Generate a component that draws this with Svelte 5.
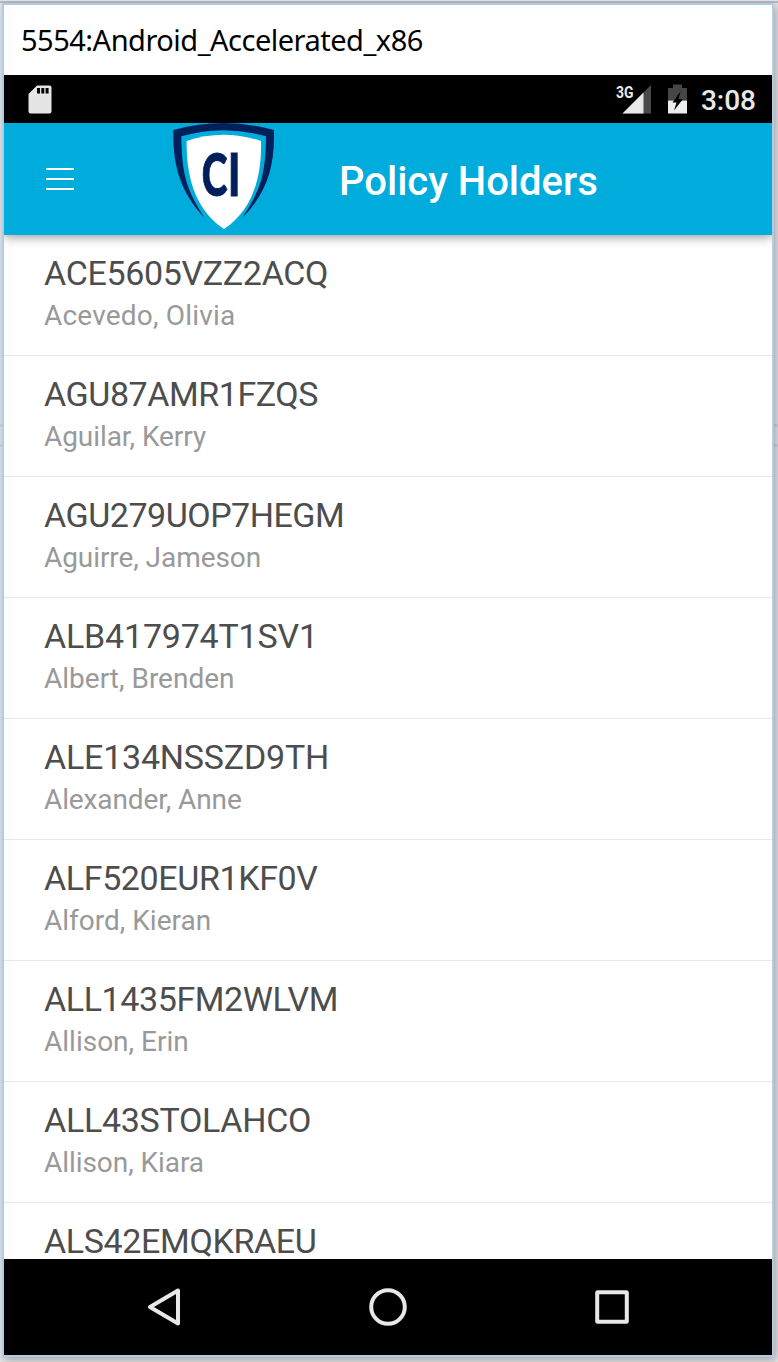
<script>
  // policy number, holder name, tracking of each line in px
  const holders = [
    ['ACE5605VZZ2ACQ', 'Acevedo, Olivia', -0.34, 0.2],
    ['AGU87AMR1FZQS', 'Aguilar, Kerry', -0.44, -0.07],
    ['AGU279UOP7HEGM', 'Aguirre, Jameson', -0.48, -0.07],
    ['ALB417974T1SV1', 'Albert, Brenden', -0.2, 0],
    ['ALE134NSSZD9TH', 'Alexander, Anne', -0.22, -0.12],
    ['ALF520EUR1KF0V', 'Alford, Kieran', -0.38, 0],
    ['ALL1435FM2WLVM', 'Allison, Erin', -0.4, 0],
    ['ALL43STOLAHCO', 'Allison, Kiara', -0.3, -0.06],
    ['ALS42EMQKRAEU', '', -0.36, 0]
  ];
</script>

<div class="desktop">
  <div class="window">
    <div class="titlebar"><span>5554:Android_Accelerated_x86</span></div>

    <div class="status">
      <svg class="sd" width="24" height="29" viewBox="0 0 24 29">
        <path d="M9 .5H21.5Q23.500 .5 23.500 2.500V26.500Q23.500 28.500 21.500 28.500H2.500Q.5 28.500 .5 26.500V9Z" fill="#e5e5e5" />
        <path d="M9 3h3v5.500h-3zM13.300 3h3v5.500h-3zM17.600 3h3v5.500h-3z" fill="#000" />
      </svg>
      <div class="indicators">
        <svg width="36" height="30" viewBox="0 0 36 30">
          <path d="M35 0V28.500H6.500Z" fill="#4a4a4a" />
          <path d="M27.500 7.500V28.500H6.500Z" fill="#e8e8e8" />
          <text x="0" y="12.500" textLength="17.500" lengthAdjust="spacingAndGlyphs">3G</text>
        </svg>
        <svg class="battery" width="20" height="30" viewBox="0 0 20 30">
          <path d="M0 3H5V-.5H14V3H19V15.500H0Z" fill="#464646" />
          <path d="M0 15.500H19V28.500H0Z" fill="#ededed" />
          <path d="M12.500 6.500L4.500 17.500H8.500L6 25.500L15 14H10.500Z" fill="#000" />
        </svg>
        <span class="clock">3:08</span>
      </div>
    </div>

    <header>
      <div class="menu"><i></i><i></i><i></i></div>
      <svg class="logo" width="101" height="107" viewBox="39 24 303 321">
        <path d="M40 45Q191 3 342 45C344 150 325 230 247 308C297 230 317 190 318 64Q191 28 64 64C65 190 85 230 133 308C60 230 38 150 40 45Z" fill="#00205b" />
        <path d="M80 78Q191 40 303 78C306 200 270 290 192 342C114 290 78 200 80 78Z" fill="#fff" />
        <g class="initials">
          <text x="125" y="242" textLength="77" lengthAdjust="spacingAndGlyphs">C</text>
          <text x="204" y="242" textLength="37" lengthAdjust="spacingAndGlyphs">I</text>
        </g>
      </svg>
      <h1>Policy Holders</h1>
    </header>

    <main>
      {#each holders as [policy, name, policyTracking, nameTracking]}
        <div class="row">
          <div class="policy" style:letter-spacing="{policyTracking}px">{policy}</div>
          <div class="name" style:letter-spacing="{nameTracking}px">{name}</div>
        </div>
      {/each}
    </main>

    <nav>
      <svg width="40" height="40" viewBox="0 0 40 40"><path d="M34 3.500V36.500L6 20Z" stroke-linejoin="round" /></svg>
      <svg width="40" height="40" viewBox="0 0 40 40"><circle cx="20" cy="20" r="16.800" /></svg>
      <svg width="40" height="40" viewBox="0 0 40 40"><rect x="5.200" y="5.200" width="29.600" height="29.600" rx=".5" stroke-linejoin="round" /></svg>
    </nav>
  </div>
</div>

<style>
  :global(body) { margin: 0; }
  * { box-sizing: border-box; }
  .desktop {
    width: 778px;
    height: 1362px;
    padding: 3px 4px 5px 2px;
    overflow: hidden;
    font-family: Roboto, sans-serif;
    background:
      linear-gradient(#b9b7c1, #b9b7c1) 0 1px / 100% 2px no-repeat,
      linear-gradient(#d4d4d4, #d4d4d4) 0 424px / 100% 3px no-repeat,
      linear-gradient(#d4d4d4, #d4d4d4) 0 444px / 100% 3px no-repeat,
      #e4e4e4;
  }
  .window {
    width: 772px;
    height: 1354px;
    border: 2px solid #b0cbe8;
    background: #fff;
    display: flex;
    flex-direction: column;
    box-shadow: 2px 3px 8px rgba(0, 0, 0, .28);
  }
  .titlebar {
    height: 70px;
    flex: none;
    display: flex;
    align-items: center;
    padding-left: 17px;
    color: #000;
    font: 29px/40px "Noto Sans", sans-serif;
    letter-spacing: -.5px;
  }
  .status {
    height: 48px;
    flex: none;
    background: #000;
    display: flex;
    justify-content: space-between;
    padding: 10px 16px 0 24px;
  }
  .indicators { display: flex; }
  .indicators svg { overflow: visible; }
  .indicators text { font: bold 17px Roboto, sans-serif; fill: #e8e8e8; }
  .battery { margin-left: 16px; }
  .clock {
    margin-left: 13px;
    color: #e8e8e8;
    font-size: 28px;
    font-weight: 500;
    line-height: 31px;
  }
  header {
    height: 112px;
    flex: none;
    display: flex;
    background: #00acdc;
    box-shadow: 0 2px 10px rgba(0, 0, 0, .42);
    clip-path: inset(0 0 -14px 0);
    z-index: 1;
  }
  .menu {
    width: 28px;
    margin: 45px 99px 0 42px;
    display: flex;
    flex-direction: column;
    gap: 8px;
  }
  .menu i { height: 2px; background: #fff; }
  .initials text {
    font: 900 178px Lato, sans-serif;
    fill: #00205b;
    stroke: #00205b;
    stroke-width: 3;
  }
  h1 {
    margin: 0 0 0 65px;
    color: #fff;
    font-size: 40px;
    font-weight: 500;
    line-height: 117px;
    white-space: nowrap;
  }
  main { height: 1024px; flex: none; overflow: hidden; }
  .row {
    height: 121px;
    padding: 18px 40px 0;
    border-bottom: 1px solid #e8e8e8;
  }
  .policy { color: #4d4d4d; font-size: 34px; line-height: 41px; }
  .name { color: #999; font-size: 28px; line-height: 43px; }
  nav {
    height: 96px;
    flex: none;
    background: #000;
    display: flex;
    align-items: center;
    justify-content: center;
    gap: 184px;
  }
  nav svg { fill: none; stroke: #e8e8e8; stroke-width: 4; }
</style>
